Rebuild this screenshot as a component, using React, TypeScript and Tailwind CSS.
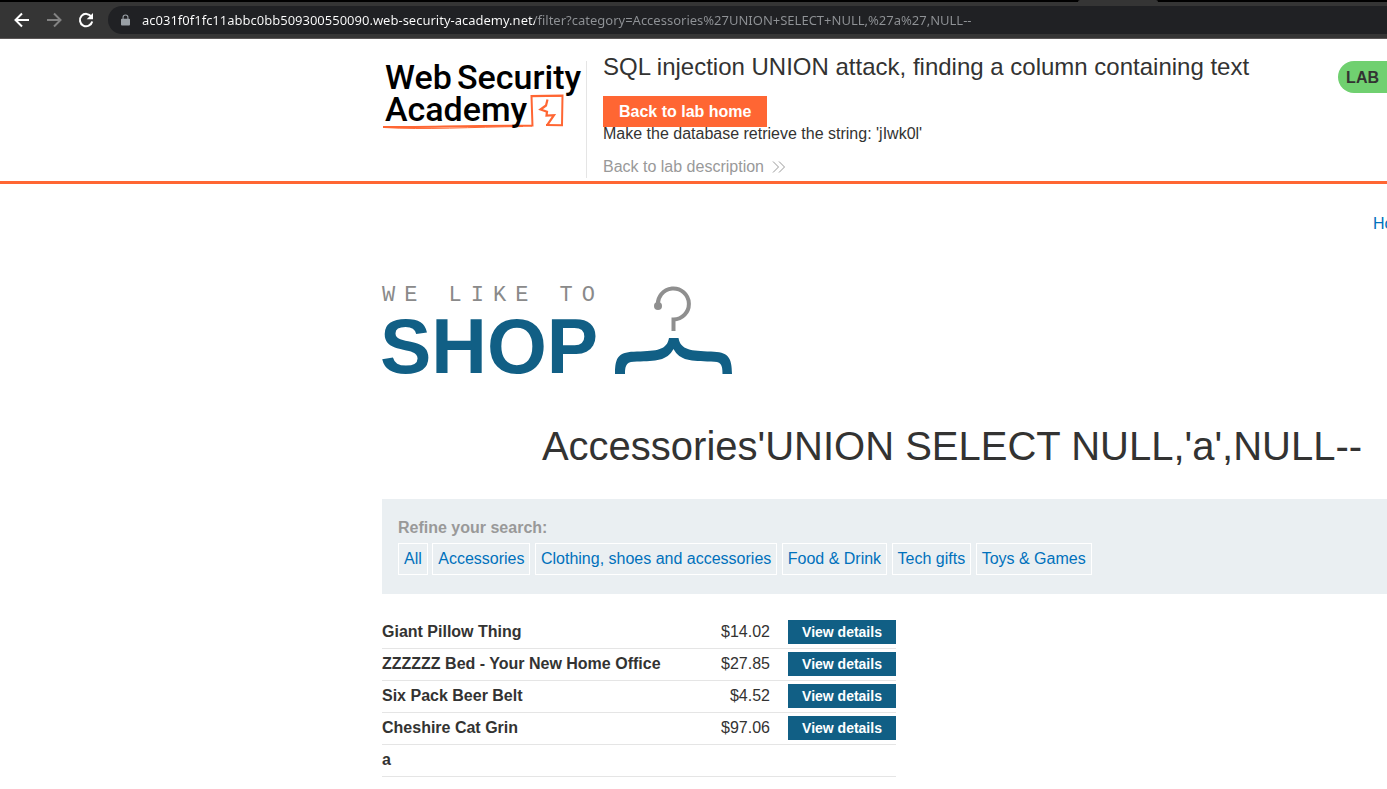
import React from "react";

const categories = [
  "All",
  "Accessories",
  "Clothing, shoes and accessories",
  "Food & Drink",
  "Tech gifts",
  "Toys & Games",
];

const products = [
  { name: "Giant Pillow Thing", price: "$14.02" },
  { name: "ZZZZZZ Bed - Your New Home Office", price: "$27.85" },
  { name: "Six Pack Beer Belt", price: "$4.52" },
  { name: "Cheshire Cat Grin", price: "$97.06" },
  { name: "a", price: "" },
];

function BrowserBar() {
  return (
    <div className="flex flex-col">
      <div className="flex h-[2px] bg-black pl-[1078px]">
        <div className="w-20 rounded-t-xs bg-[#353535]" />
      </div>
      <div className="flex h-[37px] items-center border-b border-[#5a5656] bg-[#353535] pl-3">
        <div className="flex items-center gap-3">
          <button aria-label="Back" className="size-5">
            <svg viewBox="0 0 20 20" className="size-5" fill="none" stroke="#fff" strokeWidth="2">
              <path d="M17 10H4M10 3.5 3.5 10l6.5 6.5" />
            </svg>
          </button>
          <button aria-label="Forward" className="size-5">
            <svg viewBox="0 0 20 20" className="size-5" fill="none" stroke="#828282" strokeWidth="2">
              <path d="M3 10h13M10 3.5l6.5 6.5-6.5 6.5" />
            </svg>
          </button>
          <button aria-label="Reload" className="size-5">
            <svg viewBox="0 0 20 20" className="size-5" fill="none" stroke="#fff" strokeWidth="2">
              <path d="M15.3 6.6A6.2 6.2 0 1 0 16.2 11.5" />
              <path d="M17 3v6.3h-6.3z" fill="#fff" stroke="none" />
            </svg>
          </button>
        </div>
        <label className="ml-3 flex h-7 flex-1 items-center gap-3 rounded-l-full bg-[#202124] pl-[13px]">
          <svg viewBox="0 0 10 12" className="h-3 w-[9px]">
            <path d="M1 4.500h8a1 1 0 0 1 1 1V11a1 1 0 0 1-1 1H1a1 1 0 0 1-1-1V5.500a1 1 0 0 1 1-1z" fill="#9aa0a6" />
            <path d="M2.300 5V3a2.700 2.500 0 0 1 5.400 0v2" fill="none" stroke="#9aa0a6" strokeWidth="1.200" />
          </svg>
          <input
            aria-label="Address"
            readOnly
            value="ac031f0f1fc11abbc0bb509300550090.web-security-academy.net/filter?category=Accessories%27UNION+SELECT+NULL,%27a%27,NULL--"
            className="min-w-0 flex-1 bg-[linear-gradient(90deg,#fff_393px,#8f9296_393px)] bg-clip-text font-['Noto_Sans',sans-serif] text-[13px] leading-5 text-transparent outline-none"
          />
        </label>
      </div>
    </div>
  );
}

function AcademyLogo() {
  return (
    <svg
      viewBox="0 0 204 75"
      className="h-[75px] w-[204px]"
      role="img"
      aria-label="Web Security Academy"
      fontFamily="Roboto, sans-serif"
      fontSize="34"
      fontWeight="500"
    >
      <path d="M0 71C30 71.500 90 69.500 149 69.700" fill="none" stroke="#ff6633" strokeWidth="2" />
      <path d="M1 71.500C40 74 90 71 140 70.500" fill="none" stroke="#ff6633" strokeWidth="1" />
      <path d="M149.500 70.500 148.500 40l31-.5-.5 29.800-16-.3" fill="none" stroke="#ff6633" strokeWidth="2" />
      <path d="M148 40.500 180 40" fill="none" stroke="#ff6633" strokeWidth="1.500" />
      <path d="M164.500 43.500l-1.500 6-5.500 4 6.500 2.200-.5 3.800 7.500-.3-6.500 9.500" fill="none" stroke="#ff6633" strokeWidth="2.200" />
      <text x="2" y="33">Web</text>
      <text x="74" y="33">Security</text>
      <text x="2" y="65">Academy</text>
    </svg>
  );
}

function LabHeader() {
  return (
    <header className="flex items-start border-b-[3px] border-[#ff6633] pl-[383px]">
      <a href="#academy" className="shrink-0 pt-[17px]">
        <AcademyLogo />
      </a>
      <div className="mt-[22px] mb-[3px] -ml-px flex h-[117px] shrink-0 flex-col items-start border-l border-[#e5e5e5] pl-4">
        <h2 className="-mt-2 text-2xl leading-7">SQL injection UNION attack, finding a column containing text</h2>
        <a href="#home" className="mt-[15px] h-[31px] bg-[#ff6633] px-4 py-1 leading-6 font-bold text-white">
          Back to lab home
        </a>
        <p className="-mt-[3px] leading-5">Make the database retrieve the string: 'jIwk0l'</p>
        <a href="#description" className="mt-[13px] flex items-center gap-2 leading-5 text-[#999]">
          Back to lab description
          <svg viewBox="0 0 14 12" className="h-3 w-3.5" fill="none" stroke="#999" strokeWidth="1">
            <path d="M1 .5 6.500 6 1 11.500M7 .5 12.500 6 7 11.500" />
          </svg>
        </a>
      </div>
      <div className="mt-[22px] ml-[89px] flex h-8 w-36 shrink-0 items-center rounded-full bg-[#70d070] px-2 pt-px font-bold">
        LAB
      </div>
    </header>
  );
}

function ShopLogo() {
  return (
    <div className="flex items-start">
      <div className="w-[233px]">
        <div className="font-['Liberation_Mono',monospace] text-[22px] leading-6 tracking-[9px] whitespace-nowrap text-[#8a8a8a]">
          WE LIKE TO
        </div>
        <div className="-ml-0.5 text-[77px] leading-[76px] font-bold text-[#115f85]">SHOP</div>
      </div>
      <svg viewBox="0 0 118 90" className="mt-0.5 h-[90px] w-[118px] shrink-0" fill="none">
        <circle cx="43" cy="20" r="4" fill="#8f8f8f" />
        <path d="M43 20A15.500 15.500 0 1 1 58.500 33.500V45" stroke="#8f8f8f" strokeWidth="4" />
        <path
          d="M0 88C0 70 4 66 22 65.500C42 65 52 64 54 52H63.500C65.500 64 76 65 96 65.500C113 66 117 71 117 88H107.500C107.500 78 106 75.500 96 75.500C76 75 65 75 58.500 63C52 75 41 75 22 75.500C12 75.500 10 78 10 88Z"
          fill="#115f85"
        />
      </svg>
    </div>
  );
}

export default function App() {
  return (
    <div className="min-h-screen overflow-hidden bg-white font-['Liberation_Sans',Arial,sans-serif] text-base text-[#333332]">
      <BrowserBar />
      <LabHeader />
      <main className="w-[1522px] pl-[382px]">
        <nav className="flex pt-7 pl-[991px]">
          <a href="#home" className="leading-6 text-[#0071bc]">
            Home
          </a>
        </nav>
        <div className="pt-12">
          <ShopLogo />
        </div>
        <h1 className="mt-[35px] text-center text-[40px] leading-[54px]">
          Accessories'UNION SELECT NULL,'a',NULL--
        </h1>
        <section className="mt-[26px] bg-[#eaeff2] px-4 pt-[17px] pb-[19px]">
          <div className="pb-1 leading-[23px] font-bold text-[#999]">Refine your search:</div>
          <div className="h-8">
            {categories.map((c) => (
              <React.Fragment key={c}>
                <a href="#filter" className="inline-block border border-white px-[5px] leading-[30px] text-[#0071bc]">
                  {c}
                </a>{" "}
              </React.Fragment>
            ))}
          </div>
        </section>
        <table className="mt-[22px] w-[514px] border-collapse">
          <tbody>
            {products.map((p) => (
              <tr key={p.name} className="h-8 border-b border-[#e5e5e5]">
                <th scope="row" className="p-0 text-left leading-6">
                  {p.name}
                </th>
                <td className="p-0 pr-[18px] text-right leading-6">{p.price}</td>
                <td className="w-[108px] p-0">
                  {p.price && (
                    <a
                      href="#product"
                      className="block bg-[#115f85] text-center text-sm leading-6 font-bold text-white"
                    >
                      View details
                    </a>
                  )}
                </td>
              </tr>
            ))}
          </tbody>
        </table>
      </main>
    </div>
  );
}
